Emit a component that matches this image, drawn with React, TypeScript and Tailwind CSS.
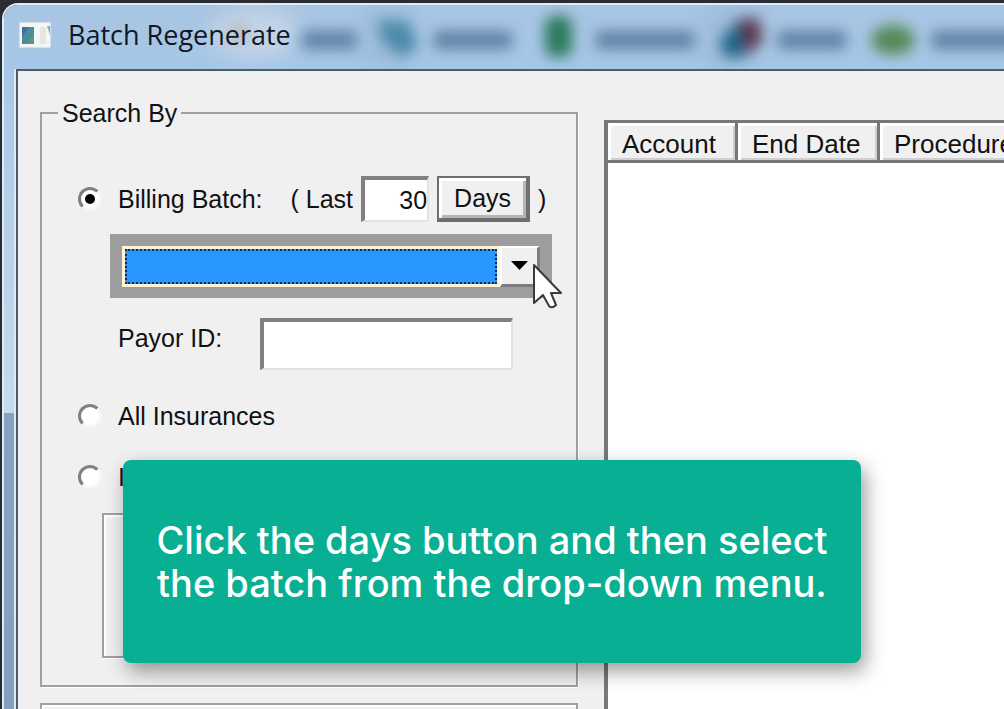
import type { ReactNode } from "react";

const columns = ["Account", "End Date", "Procedure"];

const radioClass =
  "relative h-6 w-6 shrink-0 appearance-none rounded-full border-3 border-t-[#808080] border-l-[#808080] border-r-[#f6f6f6] border-b-[#f6f6f6] bg-white checked:before:absolute checked:before:inset-1 checked:before:rounded-full checked:before:bg-black";

function TitleBar() {
  return (
    <header className="relative flex h-16 shrink-0 items-center gap-4 overflow-hidden bg-linear-to-b from-[#a9c5e2] to-[#a6c7e8] pb-1 pl-[14px]">
      <svg className="absolute inset-0 h-full w-[1004px]" aria-hidden="true">
        <g className="blur-[10px]">
          <ellipse cx="250" cy="28" rx="44" ry="26" fill="#c3d4e6" />
          <rect x="360" y="2" width="46" height="60" fill="#9dbcdb" />
          <rect x="700" y="2" width="50" height="60" fill="#9dbcdb" />
        </g>
        <g className="blur-[7px]">
          <rect x="298" y="26" width="54" height="18" fill="#5f80a4" />
          <rect x="430" y="26" width="78" height="18" fill="#5f80a4" />
          <rect x="592" y="26" width="98" height="18" fill="#5f80a4" />
          <rect x="774" y="26" width="68" height="18" fill="#5f80a4" />
          <rect x="928" y="26" width="92" height="18" fill="#5f80a4" />
          <circle cx="234" cy="28" r="9" fill="#b3b7b4" />
          <path d="M374 16 H404 L414 42 L398 52 L378 36 Z" fill="#4a8aa8" />
          <rect x="541" y="11" width="27" height="41" rx="9" fill="#2b7a5c" />
          <path d="M716 36 L736 13 L740 52 H720 Z" fill="#1f6485" />
          <path d="M734 16 L754 12 L759 36 L742 51 Z" fill="#5c3850" />
          <ellipse cx="889" cy="35" rx="22" ry="15" fill="#558a58" />
        </g>
      </svg>
      <svg className="relative h-8 w-[34px]" viewBox="0 0 34 32" aria-hidden="true">
        <rect x="1" y="3" width="32" height="26" fill="#f1f6f7" stroke="#b4c6d5" />
        <rect x="4" y="8" width="12" height="17" fill="#4d8c99" />
        <path d="M4 8 H11 L4 18 Z" fill="#3e6ea6" />
        <path d="M9 25 L16 14 V25 Z" fill="#539b79" />
        <rect x="22" y="8" width="6" height="17" fill="#e6e8df" />
        <path d="M29 7 H32 V16 Z" fill="#8eabc5" />
      </svg>
      <h1 className="relative font-['Open_Sans',sans-serif] text-[27px] leading-8 text-[#101828]">
        Batch Regenerate
      </h1>
    </header>
  );
}

function RadioRow({ id, checked, children }: { id: string; checked?: boolean; children: ReactNode }) {
  return (
    <div className="flex items-center gap-4">
      <input id={id} type="radio" name="search-by" defaultChecked={checked} className={radioClass} />
      <label htmlFor={id}>{children}</label>
    </div>
  );
}

function SearchBy() {
  return (
    <fieldset className="shrink-0 border-2 border-[#a0a0a0] pb-[27px] pl-9 text-[25px] shadow-[1px_1px_0_#fff]">
      <legend className="-ml-5 px-1 leading-7">Search By</legend>

      <div className="mt-[49px] flex h-[46px] items-center">
        <RadioRow id="billing" checked>
          Billing Batch:
        </RadioRow>
        <label htmlFor="days" className="ml-7">
          ( Last
        </label>
        <input
          id="days"
          defaultValue="30"
          className="ml-2 h-[46px] w-[68px] border-t-4 border-r-2 border-b-2 border-l-4 border-t-[#808080] border-r-[#e3e3e3] border-b-[#e3e3e3] border-l-[#808080] bg-white text-right outline-none"
        />
        <button
          type="button"
          className="ml-2 h-[46px] w-[93px] border-t-2 border-r-4 border-b-4 border-l-2 border-[#6e6e6e] bg-[#f0f0f0] shadow-[inset_3px_3px_0_#fff,inset_-3px_-3px_0_#b5b5b5]"
        >
          Days
        </button>
        <span className="ml-2">)</span>
      </div>

      <div className="mt-3 ml-8 flex h-16 w-[442px] items-center bg-[#9d9d9d] px-3">
        <select
          aria-label="Billing batch"
          className="h-[41px] min-w-0 flex-1 appearance-none border-3 border-[#fff3d8] bg-[#2997ff] outline-2 -outline-offset-5 outline-dotted outline-[#142b45]"
        >
          <option></option>
        </select>
        <span className="pointer-events-none flex h-[41px] w-10 items-center justify-center border-t-2 border-r-3 border-b-3 border-l-2 border-t-white border-r-[#7c7c7c] border-b-[#7c7c7c] border-l-white bg-[#f0f0f0]">
          <svg className="h-[9px] w-[17px]" viewBox="0 0 17 9" aria-hidden="true">
            <path d="M0 0 H17 L8.500 9 Z" fill="#000" />
          </svg>
        </span>
      </div>

      <div className="mt-5 ml-10 flex items-center">
        <label htmlFor="payor" className="w-[142px] pb-3">
          Payor ID:
        </label>
        <input
          id="payor"
          className="h-[52px] w-[253px] border-t-4 border-r-2 border-b-2 border-l-4 border-t-[#808080] border-r-[#e3e3e3] border-b-[#e3e3e3] border-l-[#808080] bg-white outline-none"
        />
      </div>

      <div className="mt-[30px] flex flex-col gap-[29px]">
        <RadioRow id="all">All Insurances</RadioRow>
        <RadioRow id="one">Insurance</RadioRow>
      </div>
      <div className="mt-5 mr-6 ml-6 h-[145px] border-2 border-[#a0a0a0] shadow-[inset_2px_2px_0_#fff,1px_1px_0_#fff]" />
    </fieldset>
  );
}

export default function App() {
  return (
    <div className="relative h-screen overflow-hidden bg-[#292d33] pt-[3px] pl-[2px] font-['Liberation_Sans',Arial,sans-serif] text-[26px] leading-8 text-[#111]">
      <main className="flex h-full flex-col overflow-hidden rounded-tl-2xl border-t-2 border-l-2 border-[#dcebf7]">
        <TitleBar />
        <div className="flex min-h-0 flex-1">
          <div className="flex w-3 shrink-0 flex-col border-r-2 border-[#dcebf7] bg-linear-to-b from-[#8ba7c3] to-[#84a0bc]">
            <div className="h-[344px] bg-linear-to-b from-[#a9c7e7] to-[#c6dbea]" />
          </div>
          <div className="flex min-w-0 flex-1 border-t-2 border-l-2 border-[#4e5b69] bg-[#f0f0f0] pl-[22px]">
            <div className="flex w-[538px] shrink-0 flex-col gap-4 pt-7">
              <SearchBy />
              <div className="h-24 shrink-0 border-2 border-[#a0a0a0] shadow-[inset_2px_2px_0_#fff]" />
            </div>
            <div className="mt-[49px] ml-[26px] min-w-0 flex-1 overflow-hidden border-t-3 border-l-4 border-[#787878] bg-white">
              <table className="w-[440px] table-fixed border-separate border-spacing-0">
                <colgroup>
                  <col className="w-[130px]" />
                  <col className="w-[142px]" />
                  <col />
                </colgroup>
                <thead>
                  <tr>
                    {columns.map((name) => (
                      <th
                        key={name}
                        className="h-10 border-r-3 border-b-3 border-[#787878] bg-[#f0f0f0] p-0 pt-1 pl-[14px] text-left font-normal whitespace-nowrap shadow-[inset_3px_3px_0_#fff,inset_-2px_-2px_0_#cfcfcf]"
                      >
                        {name}
                      </th>
                    ))}
                  </tr>
                </thead>
              </table>
            </div>
          </div>
        </div>
      </main>

      <svg className="absolute top-[262px] left-[532px] h-12 w-8" viewBox="0 0 32 48" aria-hidden="true">
        <path
          d="M2 3 V41 L11 33 L17 44 Q20 47 24 43 L19 31 H29 Z"
          fill="#fff"
          stroke="#3a3a3a"
          strokeWidth="2"
          strokeLinejoin="round"
        />
      </svg>

      <aside className="absolute top-[460px] left-[123px] flex h-[203px] w-[738px] items-center justify-center rounded-lg bg-[#08af92] text-center font-['Inter',sans-serif] text-[38px] leading-[43px] font-medium text-white shadow-[4px_8px_20px_rgba(0,0,0,0.4)]">
        <p>
          Click the days button and then select
          <br />
          the batch from the drop-down menu.
        </p>
      </aside>
    </div>
  );
}
